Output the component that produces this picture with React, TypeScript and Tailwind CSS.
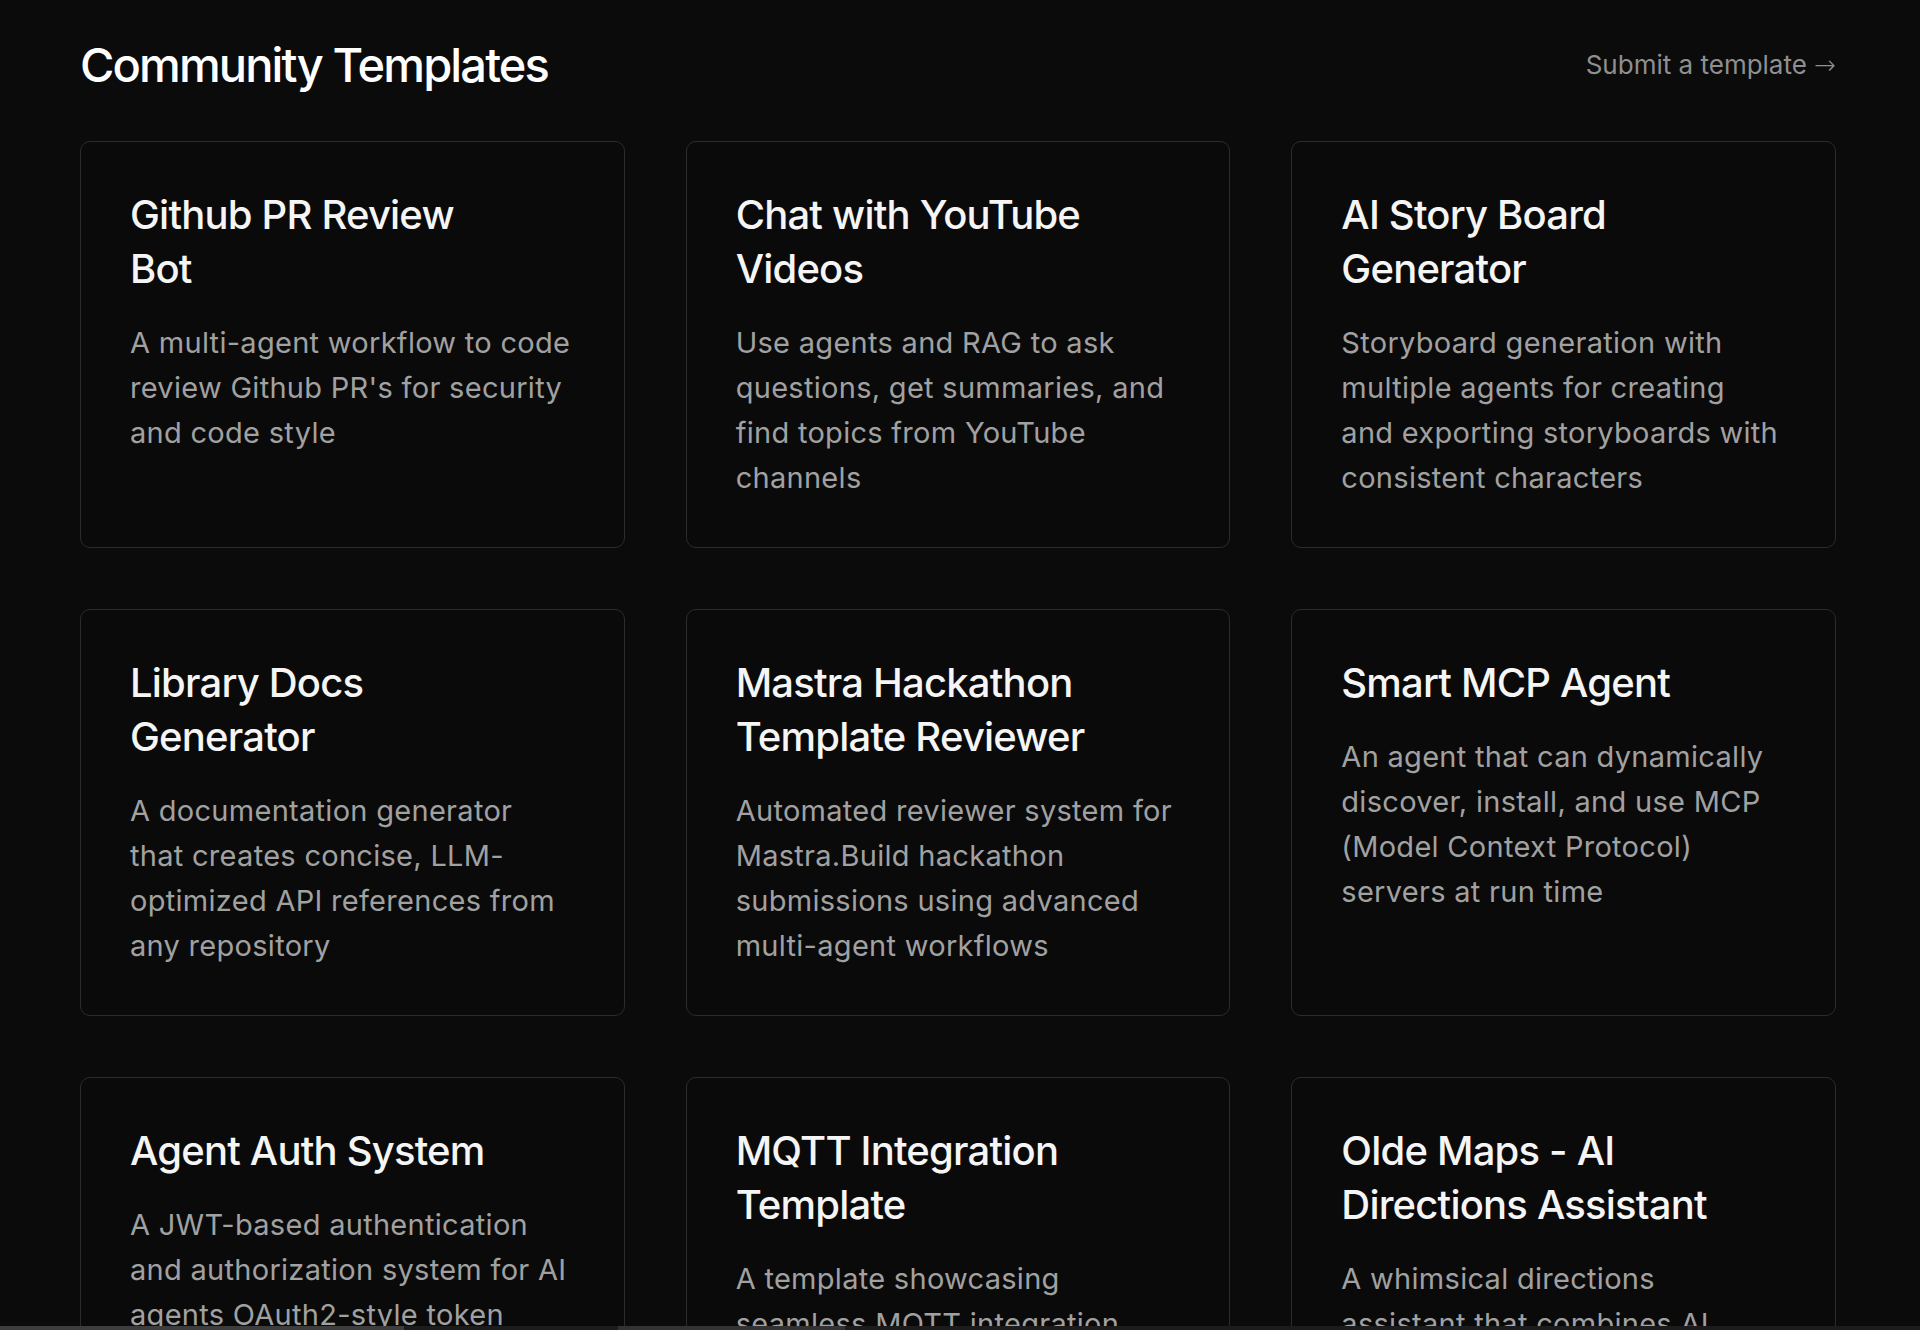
import React from 'react';

interface Template {
  title: string[];
  description: string[];
}

const templates: Template[] = [
  {
    title: ['Github PR Review', 'Bot'],
    description: ['A multi-agent workflow to code', "review Github PR's for security", 'and code style'],
  },
  {
    title: ['Chat with YouTube', 'Videos'],
    description: ['Use agents and RAG to ask', 'questions, get summaries, and', 'find topics from YouTube', 'channels'],
  },
  {
    title: ['AI Story Board', 'Generator'],
    description: ['Storyboard generation with', 'multiple agents for creating', 'and exporting storyboards with', 'consistent characters'],
  },
  {
    title: ['Library Docs', 'Generator'],
    description: ['A documentation generator', 'that creates concise, LLM-', 'optimized API references from', 'any repository'],
  },
  {
    title: ['Mastra Hackathon', 'Template Reviewer'],
    description: ['Automated reviewer system for', 'Mastra.Build hackathon', 'submissions using advanced', 'multi-agent workflows'],
  },
  {
    title: ['Smart MCP Agent'],
    description: ['An agent that can dynamically', 'discover, install, and use MCP', '(Model Context Protocol)', 'servers at run time'],
  },
  {
    title: ['Agent Auth System'],
    description: ['A JWT-based authentication', 'and authorization system for AI', 'agents OAuth2-style token', 'management and permissions'],
  },
  {
    title: ['MQTT Integration', 'Template'],
    description: ['A template showcasing', 'seamless MQTT integration', 'with Mastra agents', 'and workflows'],
  },
  {
    title: ['Olde Maps - AI', 'Directions Assistant'],
    description: ['A whimsical directions', 'assistant that combines AI', 'with old-fashioned maps', 'and charm'],
  },
];

const TemplateCard: React.FC<{ template: Template }> = ({ template }) => (
  <div className="h-[407px] rounded-[10px] border border-[#2c2c2c] bg-[#0a0a0a] px-[49px] pt-[46px]">
    <h3 className="font-['Inter',sans-serif] text-[40px] leading-[54px] font-medium tracking-[-0.02em] text-[#f5f5f5] whitespace-nowrap">
      {template.title.map((line, i) => (
        <div key={i}>{line}</div>
      ))}
    </h3>
    <p className="mt-[24px] font-['Inter',sans-serif] text-[29px] leading-[45px] tracking-[0.01em] text-[#a1a1a1] whitespace-nowrap">
      {template.description.map((line, i) => (
        <span key={i} className="block">{line}</span>
      ))}
    </p>
  </div>
);

export default function App() {
  return (
    <div className="flex h-[1330px] flex-col overflow-hidden bg-[#0b0b0b]">
      <div className="flex-1 overflow-hidden pl-20 pr-[84px]">
        <div className="flex h-[130px] items-center justify-between">
          <h2 className="font-['Inter',sans-serif] text-[47px] font-medium tracking-[-0.04em] text-white">
            Community Templates
          </h2>
          <a href="#" className="font-['Inter',sans-serif] text-[26px] text-[#8f8f8f]">
            Submit a template <span className="font-['DejaVu_Sans',sans-serif] font-extralight">→</span>
          </a>
        </div>
        <div className="mt-[11px] grid grid-cols-3 gap-[61px]">
          {templates.map((t) => (
            <TemplateCard key={t.title.join(' ')} template={t} />
          ))}
        </div>
      </div>
      <div className="flex h-[4px] bg-[#1c1c1c]">
        <div className="w-[404px] bg-[#3d3d3d]" />
        <div className="w-[214px] bg-[#1c1c1c]" />
        <div className="w-[227px] bg-[#333333]" />
        <div className="flex-1" />
      </div>
    </div>
  );
}
